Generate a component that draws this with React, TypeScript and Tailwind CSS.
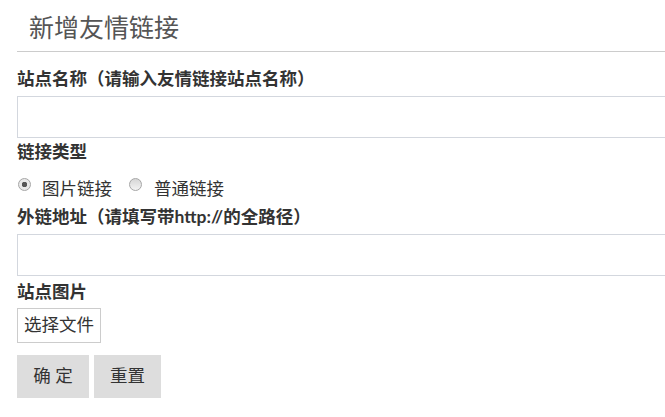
const labelCls = "block text-[17.5px] font-bold leading-[24px] text-[#333]";
const inputCls = "block w-full h-[42px] border border-[#d3d7de] bg-white outline-none";
const radioCls =
  "appearance-none w-[13px] h-[13px] m-0 mt-[-9px] rounded-full border border-[#a6a6a6] bg-gradient-to-b from-[#d6d6d6] to-[#f4f4f4] checked:bg-[radial-gradient(circle,#555_0,#555_2.5px,#e8e8e8_3px)]";

export default function App() {
  return (
    <div className="w-[665px] h-[417px] overflow-hidden bg-white font-['Lato','Noto_Sans_CJK_SC',sans-serif]">
      <div className="w-[720px] pl-[17px]">
        {/* title */}
        <h2 className="mt-[9px] pl-[12px] pb-[6px] border-b border-[#ccc] text-[25px] leading-[36px] font-normal text-[#555]">
          新增友情链接
        </h2>

        <form className="flex flex-col">
          <label className={`${labelCls} mt-[15px] mb-[5px]`}>站点名称（请输入友情链接站点名称）</label>
          <input type="text" className={inputCls} />

          <label className={`${labelCls} mt-[2px]`}>链接类型</label>
          <div className="flex items-center h-[26px] mt-[12px] text-[17.5px] text-[#333]">
            <label className="flex items-center">
              <input type="radio" name="type" defaultChecked className={`${radioCls} ml-[1px]`} />
              <span className="ml-[11px]">图片链接</span>
            </label>
            <label className="flex items-center ml-[17px]">
              <input type="radio" name="type" className={radioCls} />
              <span className="ml-[12px]">普通链接</span>
            </label>
          </div>

          <label className={`${labelCls} mt-[3px] mb-[5px]`}>外链地址（请填写带http://的全路径）</label>
          <input type="text" className={inputCls} />

          <label className={`${labelCls} mt-[4px] mb-[4px]`}>站点图片</label>
          <div>
            <button type="button" className="h-[35px] px-[6px] border border-[#ccc] bg-white text-[17.5px] text-[#333]">
              选择文件
            </button>
          </div>

          <div className="flex gap-[5px] mt-[12px]">
            <button type="button" className="w-[72px] h-[43px] bg-[#ddd] text-[17.5px] text-[#333]">
              确 定
            </button>
            <button type="button" className="w-[67px] h-[43px] bg-[#ddd] text-[17.5px] text-[#333]">
              重置
            </button>
          </div>
        </form>
      </div>
    </div>
  );
}
